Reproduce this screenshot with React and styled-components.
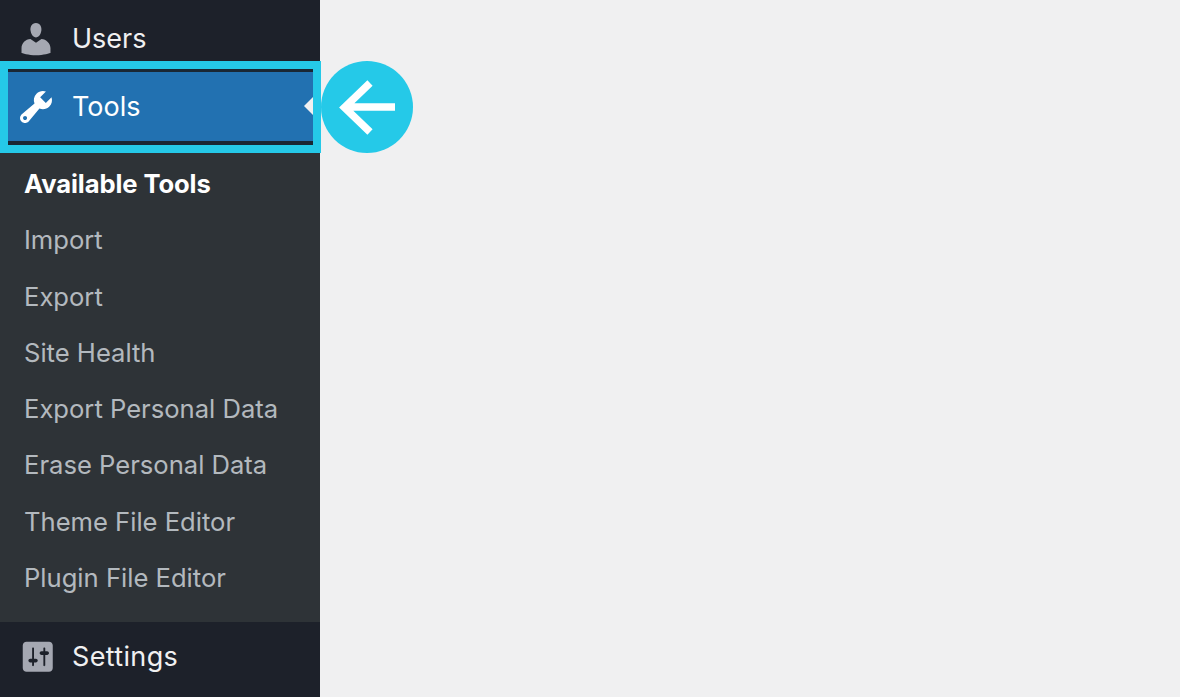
import React from 'react';
import styled, { createGlobalStyle } from 'styled-components';

const GlobalStyle = createGlobalStyle`
  html, body {
    margin: 0;
    padding: 0;
    height: 100%;
    overflow: hidden;
    background: #f0f0f1;
    font-family: Inter, "Liberation Sans", sans-serif;
  }
`;

const Page = styled.div`
  position: relative;
  display: flex;
  width: 1180px;
  height: 697px;
  overflow: hidden;
  background: #f0f0f1;
`;

const Sidebar = styled.nav`
  display: flex;
  flex-direction: column;
  width: 320px;
  height: 697px;
  background: #1d212a;
`;

const MenuRow = styled.div`
  display: flex;
  align-items: center;
  height: ${props => props.height}px;
  padding: ${props => props.pad};
  box-sizing: border-box;
  flex-shrink: 0;
  color: #f0f0f1;
  font-size: 27px;
  letter-spacing: ${props => props.spacing || '0'};
`;

const MenuIcon = styled.svg`
  width: ${props => props.size || 40}px;
  height: ${props => props.size || 40}px;
  margin: ${props => props.gutter || '0 16px 0 0'};
  flex-shrink: 0;
  fill: ${props => props.color || '#a5a8b2'};
`;

const Highlight = styled.div`
  box-sizing: border-box;
  width: 321px;
  height: 92px;
  flex-shrink: 0;
  border: 8px solid #25c9e8;
  background: #1a2734;
  padding: 3px 0 4px;
`;

const ActiveItem = styled.div`
  position: relative;
  display: flex;
  align-items: center;
  height: 69px;
  padding-left: 8px;
  background: #2271b1;
  color: #fff;
  font-size: 27px;

  &::after {
    content: '';
    position: absolute;
    right: 0;
    top: 25px;
    border: 9px solid transparent;
    border-left-width: 0;
    border-right-color: #f0f0f1;
  }
`;

const Submenu = styled.ul`
  flex: 1;
  margin: 0;
  padding: 2.3px 0 16px;
  list-style: none;
  background: #2e3337;
`;

const SubItem = styled.li`
  display: flex;
  align-items: center;
  height: 56.3px;
  padding-left: 24px;
  color: ${props => (props.$current ? '#fff' : 'rgba(240, 246, 252, 0.7)')};
  font-size: 25.6px;
  font-weight: ${props => (props.$current ? 700 : 400)};
  letter-spacing: ${props => (props.$current ? '-0.1px' : '0')};
  white-space: nowrap;
`;

const ArrowBadge = styled.div`
  position: absolute;
  left: 321px;
  top: 61px;
  display: flex;
  align-items: center;
  justify-content: center;
  width: 92px;
  height: 92px;
  border-radius: 50%;
  background: #25c9e8;
`;

const subItems = [
  'Import',
  'Export',
  'Site Health',
  'Export Personal Data',
  'Erase Personal Data',
  'Theme File Editor',
  'Plugin File Editor',
];

const App = () => (
  <>
    <GlobalStyle />
    <Page>
      <Sidebar>
        <MenuRow height={61} pad="16px 0 0 16px">
          <MenuIcon viewBox="0 0 20 20">
            <path d="M10 9.25c-2.27 0-2.73-3.44-2.73-3.44C7 4.02 7.82 2 9.97 2c2.16 0 2.98 2.02 2.71 3.81 0 0-.41 3.44-2.68 3.44zm0 2.57L12.72 10c2.39 0 4.52 2.33 4.52 4.53v2.49s-3.65 1.13-7.24 1.13c-3.65 0-7.24-1.13-7.24-1.13v-2.49c0-2.25 1.94-4.49 4.47-4.49z" />
          </MenuIcon>
          Users
        </MenuRow>
        <Highlight>
          <ActiveItem>
            <MenuIcon viewBox="0 0 20 20" color="#fff">
              <path d="M16.68 9.77c-1.34 1.34-3.3 1.67-4.95.99l-5.41 6.52c-.99.99-2.59.99-3.58 0s-.99-2.59 0-3.58l6.52-5.42c-.68-1.65-.35-3.61.99-4.95 1.28-1.28 3.12-1.62 4.72-1.06l-2.89 2.89 2.82 2.82 2.86-2.87c.53 1.58.18 3.39-1.08 4.66zM3.81 16.21c.4.39 1.04.39 1.43 0 .4-.4.4-1.04 0-1.43-.39-.4-1.03-.4-1.43 0-.39.39-.39 1.03 0 1.43z" />
            </MenuIcon>
            Tools
          </ActiveItem>
        </Highlight>
        <Submenu>
          <SubItem $current>Available Tools</SubItem>
          {subItems.map(item => (
            <SubItem key={item}>{item}</SubItem>
          ))}
        </Submenu>
        <MenuRow height={75} pad="0 0 6px 16px" spacing="0.35px">
          <MenuIcon viewBox="0 0 20 20" size={37.5} gutter="0 16px 0 2.5px">
            <path d="M18 16V4c0-1.1-.9-2-2-2H4c-1.1 0-2 .9-2 2v12c0 1.1.9 2 2 2h12c1.1 0 2-.9 2-2zM8 11h1c.55 0 1 .45 1 1s-.45 1-1 1H8v1.5c0 .28-.22.5-.5.5s-.5-.22-.5-.5V13H6c-.55 0-1-.45-1-1s.45-1 1-1h1V5.5c0-.28.22-.5.5-.5s.5.22.5.5V11zm5-2h-1c-.55 0-1-.45-1-1s.45-1 1-1h1V5.5c0-.28.22-.5.5-.5s.5.22.5.5V7h1c.55 0 1 .45 1 1s-.45 1-1 1h-1v5.5c0 .28-.22.5-.5.5s-.5-.22-.5-.5V9z" />
          </MenuIcon>
          Settings
        </MenuRow>
      </Sidebar>
      <ArrowBadge>
        <svg width="60" height="60" viewBox="0 0 60 60" fill="none" stroke="#fff" strokeWidth="7.5">
          <path d="M58 30H10M33 6L7.5 30.5 33 55" />
        </svg>
      </ArrowBadge>
    </Page>
  </>
);

export default App;
